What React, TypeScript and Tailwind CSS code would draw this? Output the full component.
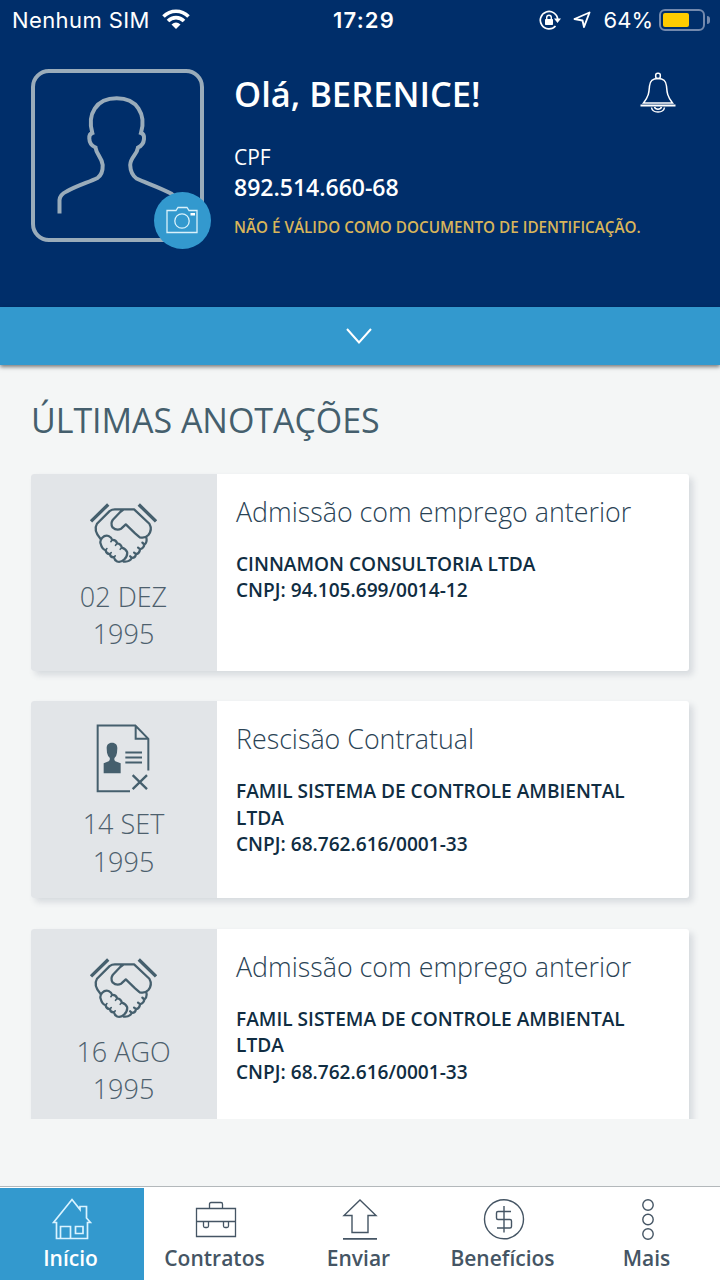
import type { ReactNode } from 'react';

const HandshakeIcon = () => (
  <svg viewBox="205 125 205 186" className="w-[68px] h-[62px]" fill="none" stroke="#455f6d" strokeWidth="6.800" strokeLinejoin="round" strokeLinecap="round">
    <path d="M211 183 L263 132 M355 132 L407 183" strokeWidth="10" strokeLinecap="butt" />
    <path d="M240 236 Q217 210 229 190 L267 152 Q274 147 283 147 H341 L387 190 Q397 208 384 224 Q374 235 358 231 L344 219 L316 192 L302 205 Q288 212 276 201 Q269 189 277 178 L300 154 L308 148" />
    <path d="M240 250 C236 238 249 223 264 227 Q273 231 275 239 Q286 238 290 249 Q301 250 304 262 Q316 265 320 276 C322 292 304 309 290 304 Q282 300 280 291 Q270 292 268 282 Q257 281 255 270 Q244 267 240 250 Z" />
    <path d="M275 239 L271 244 M290 249 L285 255 M304 262 L299 267 M255 270 L259 265 M268 282 L272 277 M280 291 L284 287" strokeWidth="5" />
    <path d="M378 232 Q381 246 372 253 Q370 264 359 267 Q357 280 347 282 Q344 294 334 293 Q328 306 309 304 M366 247 L372 253 M353 262 L359 267 M341 277 L347 282 M329 288 L334 293" />
  </svg>
);

const DocumentIcon = () => (
  <svg viewBox="228 102 162 206" className="w-[54px] h-[69px]" fill="none" stroke="#455f6d" strokeWidth="6">
    <path d="M330 303 H233 V106 H346 L385 146 V241 M347 107 V146 H385" />
    <path d="M316 187 H366 M316 202 H366 M316 217 H366" />
    <path d="M338 255 L381 297 M381 255 L338 297" strokeWidth="7" />
    <path
      d="M276 158 C265 158 260 165 260 174 L261 188 Q263 198 269 203 Q271 209 266 213 L251 219 V249 H302 V219 L286 213 Q281 209 284 203 Q290 197 291 188 L292 174 C292 165 287 158 276 158 Z"
      fill="#455f6d"
      stroke="none"
    />
  </svg>
);

const PersonIcon = () => (
  <svg viewBox="0 0 172 172" className="w-[172px] h-[172px]" fill="none" stroke="#9aacba" strokeWidth="4">
    <path d="M28.500 144.500 V131 Q29 125.500 35.500 122.500 C46 116.500 57 113.500 66.500 109 Q72 105 71.700 96 C71 88 65.500 86 64.500 78.500 Q58.500 76 58.300 69.500 Q58 65 61.300 64 C56 45 65 29.300 85.700 29.300 C106 29.300 115.500 45 110 64 Q113.500 65 113 70 Q112.500 76 107 78.500 C106 86 99.500 88 99.200 96 Q99.500 105 105.500 109.500 C115 114 128 118 140 124.500 L147 130" />
  </svg>
);

const CameraIcon = () => (
  <svg viewBox="0 0 32 28" className="w-8 h-7 -ml-0.5 -mt-0.5" fill="none" stroke="#d9f1fb" strokeWidth="1.300">
    <path d="M1 4.500 H10 L12 1.500 H21 L23 4.500 H31 V26.500 H1 Z" />
    <circle cx="16" cy="15" r="7.200" />
    <path d="M24.500 7 H29 V9.500 H24.500 Z" fill="white" stroke="none" />
  </svg>
);

const BellIcon = () => (
  <svg viewBox="0 0 36 42" className="w-9 h-[42px]" fill="none" stroke="white" strokeWidth="1.500">
    <path d="M0.500 33.500 H35.500" strokeWidth="1.800" />
    <path d="M3.500 31 C9 24 9 20 9.500 14 C10 9 12 6.500 18 6.500 C24 6.500 26 9 26.500 14 C27 20 27 24 32.500 31 Z" />
    <rect x="15.700" y="1.200" width="4.600" height="5.200" rx="2" />
    <path d="M11.500 35.500 C12.500 41.500 23.500 41.500 24.500 35.500 M14.500 35 C15.500 38 20.500 38 21.500 35" />
  </svg>
);

const HomeIcon = () => (
  <svg viewBox="0 0 40 42" className="w-10 h-[42px]" fill="none" stroke="#d9f3ff" strokeWidth="1.700">
    <path d="M4.500 24.500 H1.500 L20 1.500 L28 11.500 V8.500 H34.500 V20 L38.500 24.500 H35.500 V40.500 H4.500 Z" />
    <path d="M8.500 40 V28.500 H18.500 V40 M23.500 28.500 H31 V35.500 H23.500 Z" />
  </svg>
);

const BriefcaseIcon = () => (
  <svg viewBox="0 0 42 42" className="w-[42px] h-[42px]" fill="none" stroke="#455564" strokeWidth="1.300">
    <path d="M1.500 10.500 H40.500 V38.500 H1.500 Z M14.500 10 V6 Q14.500 4.500 16 4.500 H26 Q27.500 4.500 27.500 6 V10 M1.500 23.500 H40.500" />
    <path d="M8.500 23.500 V28 Q8.500 29.500 10 29.500 H12 Q13.500 29.500 13.500 28 V23.500 M28.500 23.500 V28 Q28.500 29.500 30 29.500 H32 Q33.500 29.500 33.500 28 V23.500" />
  </svg>
);

const SendIcon = () => (
  <svg viewBox="0 0 36 42" className="w-9 h-[42px]" fill="none" stroke="#455564" strokeWidth="1.400">
    <path d="M18 2 L34 17.500 H26 V34.500 H10 V17.500 H2 Z" />
    <path d="M1 40.800 H35" strokeWidth="1.800" />
  </svg>
);

const MoneyIcon = () => (
  <svg viewBox="0 0 42 42" className="w-[42px] h-[42px]" fill="none" stroke="#455564" strokeWidth="1.400">
    <circle cx="21" cy="21.300" r="19.500" />
    <path d="M21 8 V34.500 M28 13.500 H15 Q13.500 13.500 13.500 15 V20 Q13.500 21.500 15 21.500 H27 Q28.500 21.500 28.500 23 V28.500 Q28.500 30 27 30 H14" />
  </svg>
);

const MoreIcon = () => (
  <svg viewBox="0 0 14 42" className="w-3.5 h-[42px]" fill="none" stroke="#455564" strokeWidth="1.400">
    <circle cx="7" cy="7" r="5.200" />
    <circle cx="7" cy="21.500" r="5.200" />
    <circle cx="7" cy="36" r="5.200" />
  </svg>
);

const StatusBar = () => (
  <div className="relative h-10 flex items-center justify-between pl-3 pr-2.5 font-[Inter,sans-serif] text-[22px] leading-10 text-white">
    <div className="flex items-center gap-3">
      <span className="tracking-[0.4px]">Nenhum SIM</span>
      <svg viewBox="0 0 28 20" className="w-7 h-5 -mt-0.5" fill="none" stroke="white" strokeWidth="3.600">
        <path d="M1.500 7.500 C8.500 0.500 19.500 0.500 26.500 7.500" />
        <path d="M6 12 C10.500 7.500 17.500 7.500 22 12" />
        <path d="M9.500 15.500 Q14 11.500 18.500 15.500 L14 20 Z" fill="white" stroke="none" />
      </svg>
    </div>
    <span className="absolute left-[333px] font-semibold tracking-[1.200px]">17:29</span>
    <div className="flex items-center">
      <svg viewBox="0 0 22 20" className="w-[22px] h-5 mr-3" fill="none" stroke="white" strokeWidth="1.700">
        <path d="M16.500 16 A8.700 8.700 0 1 1 18.700 9.500" />
        <path d="M15 8.500 H22 L18.500 13 Z" fill="white" stroke="none" />
        <rect x="6" y="9" width="8" height="6" rx="0.700" fill="white" stroke="none" />
        <path d="M7.700 9.500 V7.500 C7.700 4.500 12.300 4.500 12.300 7.500 V9.500" strokeWidth="1.400" />
      </svg>
      <svg viewBox="0 0 18 18" className="w-[18px] h-[18px] mr-[13px]" fill="none" stroke="white" strokeWidth="1.900" strokeLinejoin="round">
        <path d="M16.500 1.500 L11 16 L9.500 9.500 L1.500 8 Z" />
      </svg>
      <span className="mr-1.5">64%</span>
      <div className="w-[46px] h-[22px] rounded-[6px] border-2 border-[#7389ad] p-0.5">
        <div className="w-[26px] h-3.5 rounded-[2px] bg-[#ffcc00]" />
      </div>
      <div className="w-[3px] h-2 ml-0.5 rounded-r-full bg-[#7389ad]" />
    </div>
  </div>
);

type Note = {
  kind: 'handshake' | 'document';
  day: string;
  year: string;
  title: string;
  company: string;
  cnpj: string;
};

const notes: Note[] = [
  {
    kind: 'handshake',
    day: '02 DEZ',
    year: '1995',
    title: 'Admissão com emprego anterior',
    company: 'CINNAMON CONSULTORIA LTDA',
    cnpj: '94.105.699/0014-12',
  },
  {
    kind: 'document',
    day: '14 SET',
    year: '1995',
    title: 'Rescisão Contratual',
    company: 'FAMIL SISTEMA DE CONTROLE AMBIENTAL LTDA',
    cnpj: '68.762.616/0001-33',
  },
  {
    kind: 'handshake',
    day: '16 AGO',
    year: '1995',
    title: 'Admissão com emprego anterior',
    company: 'FAMIL SISTEMA DE CONTROLE AMBIENTAL LTDA',
    cnpj: '68.762.616/0001-33',
  },
];

const NoteCard = ({ note }: { note: Note }) => (
  <div className="flex h-[197px] shrink-0 rounded-[3px] bg-white shadow-[4px_4px_6px_rgba(60,75,100,0.16)]">
    <div className="w-[186px] shrink-0 rounded-l-[3px] bg-[#e2e5e8] flex flex-col items-center pt-[22px] pr-px">
      <div className="h-[82px] pr-0.5">
        {note.kind === 'handshake' ? (
          <div className="pt-1.5"><HandshakeIcon /></div>
        ) : (
          <div className="pt-px"><DocumentIcon /></div>
        )}
      </div>
      <p className="text-[27px] leading-[37.500px] font-light text-[#4d606d] text-center">
        {note.day}
        <br />
        {note.year}
      </p>
    </div>
    <div className="pl-[19px] pr-8 pt-[18px] text-[#102d42]">
      <h2 className="text-[26.800px] leading-10 font-light text-[#2a4355] whitespace-nowrap">{note.title}</h2>
      <p className="mt-[19px] text-[19.100px] leading-[26.500px] font-semibold">{note.company}</p>
      <p className="text-[19.100px] leading-[26.500px] font-semibold">CNPJ: {note.cnpj}</p>
    </div>
  </div>
);

const tabs: { label: string; icon: ReactNode }[] = [
  { label: 'Início', icon: <HomeIcon /> },
  { label: 'Contratos', icon: <BriefcaseIcon /> },
  { label: 'Enviar', icon: <SendIcon /> },
  { label: 'Benefícios', icon: <MoneyIcon /> },
  { label: 'Mais', icon: <MoreIcon /> },
];

export default function App() {
  return (
    <div className="w-[720px] h-[1280px] overflow-hidden flex flex-col bg-[#f4f6f6] font-['Open_Sans',sans-serif]">
      {/* Header */}
      <header className="h-[307px] shrink-0 bg-[#002e6a] text-white">
        <StatusBar />
        <div className="flex pl-[31px] pr-11 pt-[29px]">
          <div className="relative w-[173px] h-[173px] shrink-0 rounded-[18px] border-4 border-[#9aacba]">
            <div className="-m-1"><PersonIcon /></div>
            <div className="absolute left-[119px] top-[119px] w-[57px] h-[57px] rounded-full bg-[#3399ce] flex items-center justify-center">
              <CameraIcon />
            </div>
          </div>
          <div className="pl-[30px] flex-1 whitespace-nowrap">
            <h1 className="pt-px text-[34.500px] leading-[48px] font-semibold">Olá, BERENICE!</h1>
            <p className="mt-6 text-[21px] leading-[30px]">CPF</p>
            <p className="text-[23px] leading-[30px] font-semibold">892.514.660-68</p>
            <p className="mt-3.5 text-[15.250px] leading-[22px] font-semibold text-[#d9b55a]">
              NÃO É VÁLIDO COMO DOCUMENTO DE IDENTIFICAÇÃO.
            </p>
          </div>
          <div className="w-9 -ml-9 pt-[3px]"><BellIcon /></div>
        </div>
      </header>

      {/* Expand bar */}
      <button className="h-[58px] shrink-0 bg-[#3399ce] flex items-center justify-center pr-[2px] shadow-[0_2px_4px_rgba(0,0,0,0.5)]">
        <svg viewBox="0 0 26 16" className="w-[26px] h-4 -mt-px" fill="none" stroke="white" strokeWidth="2">
          <path d="M1 1 L13 14.500 L25 1" />
        </svg>
      </button>

      {/* Notes */}
      <main className="h-[754px] shrink-0 overflow-hidden flex flex-col gap-[30.400px] px-[31px] pt-[30px]">
        <h2 className="-mb-[0.500px] h-[49px] text-[34px] leading-[50px] tracking-[-0.050px] text-[#455f6d]">ÚLTIMAS ANOTAÇÕES</h2>
        {notes.map((note) => (
          <NoteCard key={note.day} note={note} />
        ))}
      </main>

      {/* Bottom tabs */}
      <nav className="mt-auto h-[94px] shrink-0 grid grid-cols-5 border-t border-[#b3b8bb] bg-white">
        {tabs.map((tab, i) => (
          <div
            key={tab.label}
            className={`flex flex-col items-center ${i === 0 ? 'bg-[#3399ce] text-white mt-px pt-2.5' : 'text-[#455564] pt-[11px]'}`}
          >
            {tab.icon}
            <span className="pr-[3px] text-[21px] leading-[37px] font-semibold">{tab.label}</span>
          </div>
        ))}
      </nav>
    </div>
  );
}
